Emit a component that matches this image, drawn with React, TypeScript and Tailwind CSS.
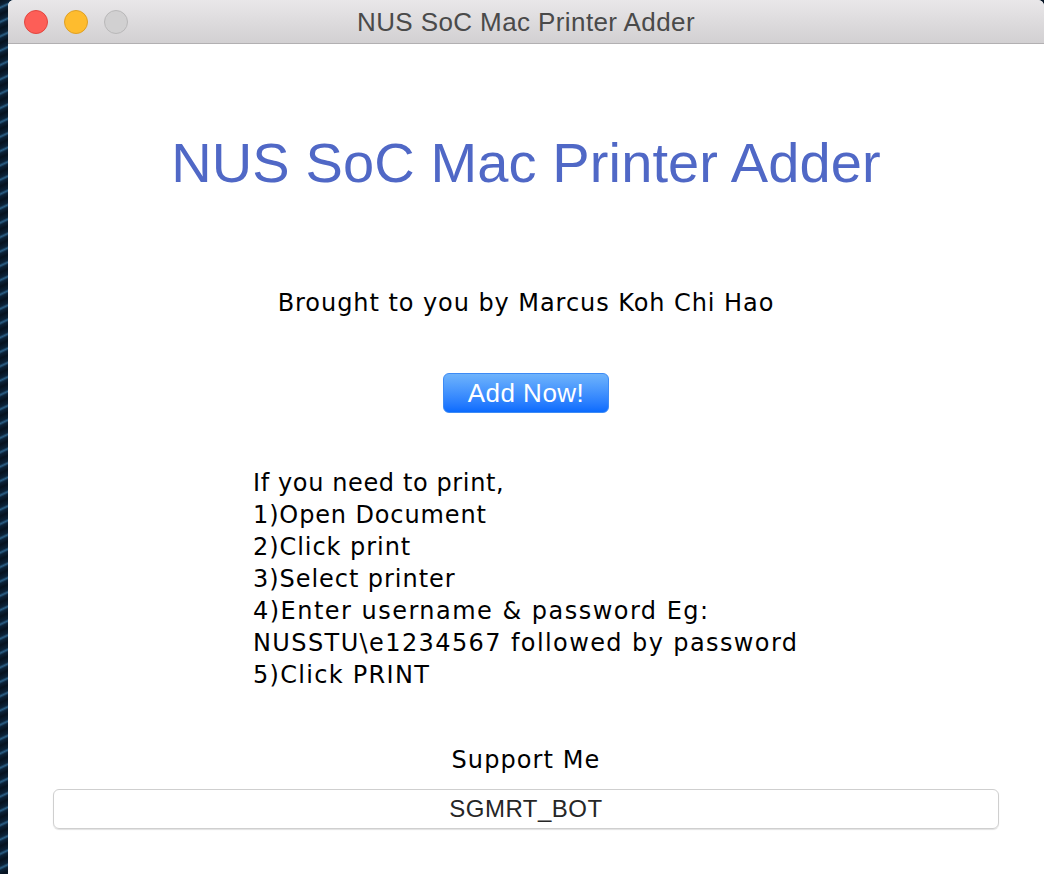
import React from "react";

const lucida = { fontFamily: '"DejaVu Sans", "Liberation Sans", sans-serif' };

export default function App() {
  const lines = [
    { t: "If you need to print,", c: "tracking-[0.62px]" },
    { t: "1)Open Document", c: "tracking-[0.87px]" },
    { t: "2)Click print", c: "tracking-[0.95px]" },
    { t: "3)Select printer", c: "tracking-[0.95px]" },
    { t: "4)Enter username & password Eg:", c: "tracking-[1.48px]" },
    { t: "NUSSTU\\e1234567 followed by password", c: "tracking-[1.4px]" },
    { t: "5)Click PRINT", c: "tracking-[1.3px]" },
  ];
  return (
    <div className="w-[1044px] h-[874px] flex overflow-hidden bg-[repeating-linear-gradient(155deg,#06121f_0px,#0b2238_5px,#2b5f86_7px,#0b2238_9px,#06121f_13px)]">
      <div className="ml-[8px] flex-1 flex flex-col rounded-t-[6px] overflow-hidden bg-white">
        {/* title bar */}
        <div className="relative h-[44px] shrink-0 flex items-center justify-center bg-gradient-to-b from-[#e9e7e9] to-[#d2d0d2] border-b border-[#b2b0b2]">
          <div className="absolute left-[16px] top-[10px] flex gap-[16px]">
            <div className="w-[24px] h-[24px] rounded-full bg-[#fd5e57] border border-[#e2463f]" />
            <div className="w-[24px] h-[24px] rounded-full bg-[#febc2e] border border-[#dfa024]" />
            <div className="w-[24px] h-[24px] rounded-full bg-[#d1d0d1] border border-[#b9b8b9]" />
          </div>
          <span
            className="text-[26px] leading-none text-[#4a4a4a] pt-[1px] tracking-[0.4px]"
            style={{ fontFamily: '"Liberation Sans", Arial, sans-serif' }}
          >
            NUS SoC Mac Printer Adder
          </span>
        </div>

        {/* content */}
        <div className="flex flex-col items-center">
          <h1
            className="mt-[87px] h-[64px] leading-[64px] text-[56px] text-[#5068c6] tracking-[0.12px]"
            style={{ fontFamily: '"Liberation Sans", Arial, sans-serif' }}
          >
            NUS SoC Mac Printer Adder
          </h1>

          <p
            className="mt-[92px] h-[32px] leading-[32px] text-[24px] text-black tracking-[0.94px]"
            style={lucida}
          >
            Brought to you by Marcus Koh Chi Hao
          </p>

          <button
            className="mt-[54px] w-[166px] h-[40px] rounded-[6px] bg-gradient-to-b from-[#6eb3fb] to-[#0a6bfe] border border-[#3d8bf5] text-white text-[26px] leading-none flex items-center justify-center tracking-[0.5px]"
            style={{ fontFamily: '"Liberation Sans", Arial, sans-serif' }}
          >
            Add Now!
          </button>

          <div
            className="mt-[54px] w-[546px] text-left text-[24px] leading-[32px] text-black"
            style={lucida}
          >
            {lines.map((l) => (
              <div key={l.t} className={"whitespace-nowrap " + l.c}>
                {l.t}
              </div>
            ))}
          </div>

          <p
            className="mt-[53px] h-[32px] leading-[32px] text-[24px] text-black tracking-[1.1px]"
            style={lucida}
          >
            Support Me
          </p>

          <div className="mt-[13px] self-stretch mx-[45px] h-[40px] rounded-[6px] border border-[#cfcfcf] shadow-[0_1px_1px_rgba(0,0,0,0.12)] flex items-center justify-center">
            <span
              className="text-[24px] leading-none text-[#262626] tracking-[0.5px]"
              style={{ fontFamily: '"Liberation Sans", Arial, sans-serif' }}
            >
              SGMRT_BOT
            </span>
          </div>
        </div>
      </div>
    </div>
  );
}
